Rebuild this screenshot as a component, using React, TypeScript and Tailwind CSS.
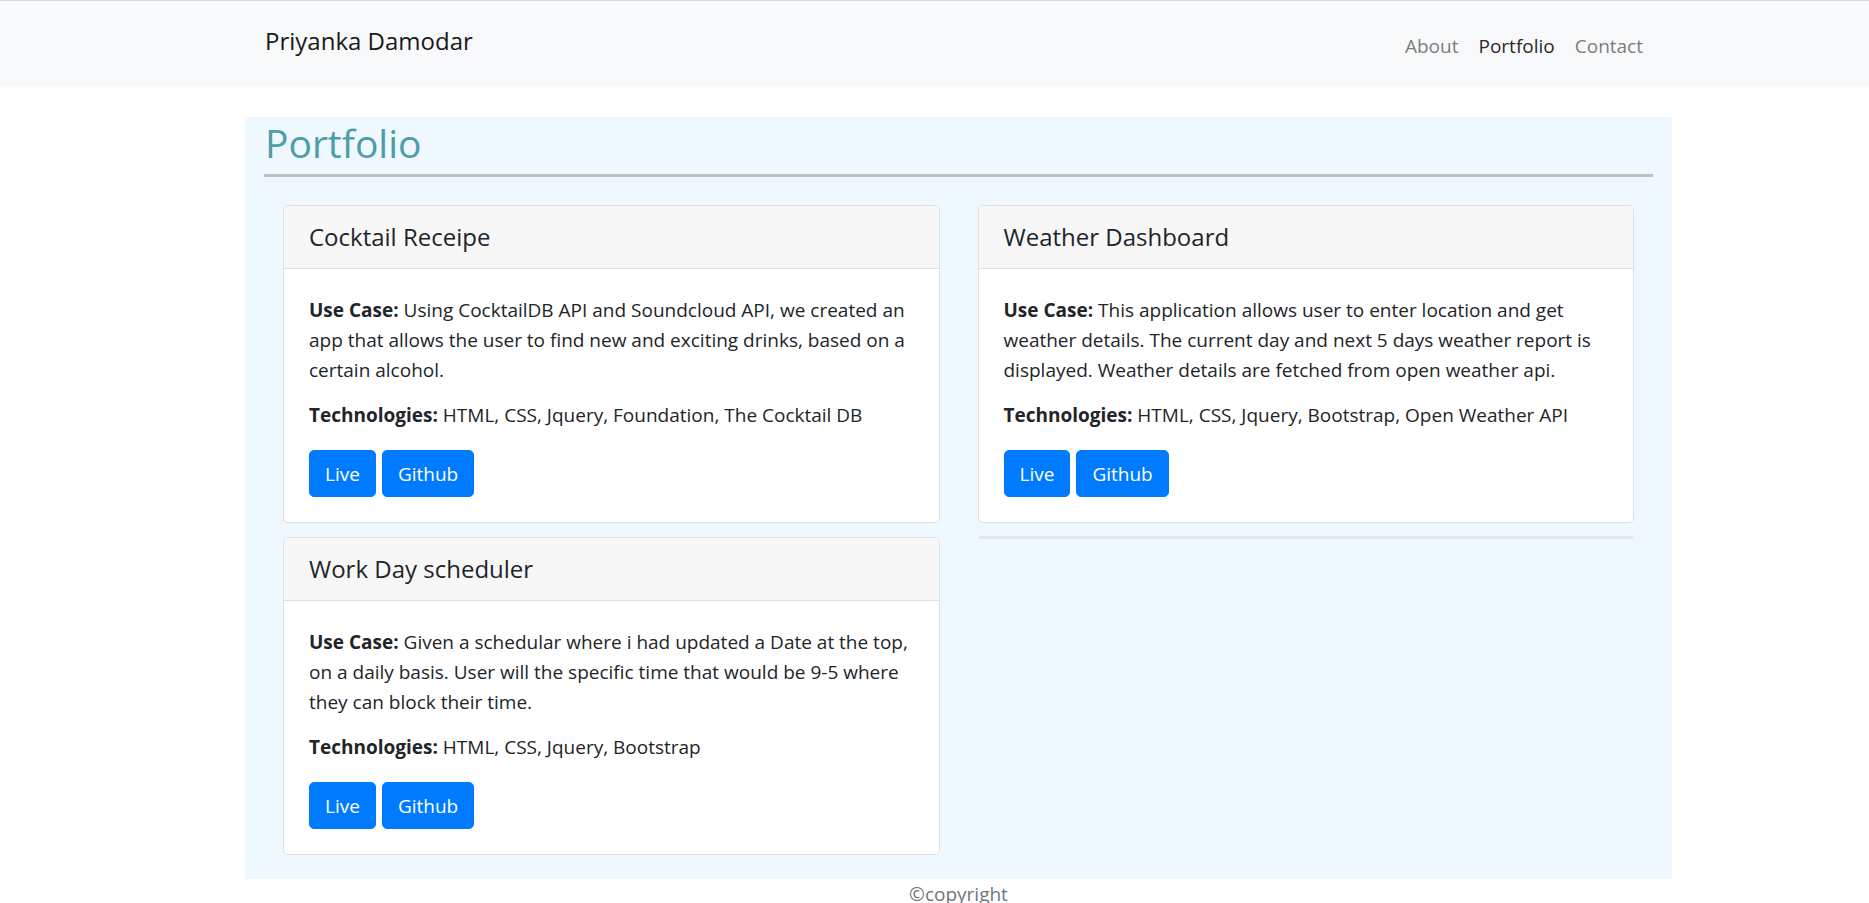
import React from 'react'

type Project = {
  title: string
  useCase: string
  tech: string
}

const projects: Project[] = [
  {
    title: 'Cocktail Receipe',
    useCase:
      'Using CocktailDB API and Soundcloud API, we created an app that allows the user to find new and exciting drinks, based on a certain alcohol.',
    tech: 'HTML, CSS, Jquery, Foundation, The Cocktail DB',
  },
  {
    title: 'Weather Dashboard',
    useCase:
      'This application allows user to enter location and get weather details. The current day and next 5 days weather report is displayed. Weather details are fetched from open weather api.',
    tech: 'HTML, CSS, Jquery, Bootstrap, Open Weather API',
  },
  {
    title: 'Work Day scheduler',
    useCase:
      'Given a schedular where i had updated a Date at the top, on a daily basis. User will the specific time that would be 9-5 where they can block their time.',
    tech: 'HTML, CSS, Jquery, Bootstrap',
  },
]

function ProjectCard({ project }: { project: Project }) {
  return (
    <div className="rounded-[5px] border border-[#dfdfdf] bg-white overflow-hidden">
      <div className="h-[63px] flex items-center px-[25px] bg-[#f7f7f7] border-b border-[#dfdfdf]">
        <h5 className="text-[24px] font-medium leading-[30px] text-[#212529]">{project.title}</h5>
      </div>
      <div className="px-[25px] pt-[26px] pb-[25px] text-[19px] leading-[30px] text-[#212529]">
        <p className="mb-[15px]">
          <strong className="font-bold">Use Case:</strong> {project.useCase}
        </p>
        <p className="mb-[20px]">
          <strong className="font-bold">Technologies:</strong> {project.tech}
        </p>
        <div className="flex gap-[6px]">
          <a className="h-[47px] px-[15px] flex items-center rounded-[5px] bg-[#007bff] text-white border border-[#007bff]">
            Live
          </a>
          <a className="h-[47px] px-[15px] flex items-center rounded-[5px] bg-[#007bff] text-white border border-[#007bff]">
            Github
          </a>
        </div>
      </div>
    </div>
  )
}

export default function App() {
  return (
    <div className="min-h-screen bg-white font-['Open_Sans','Noto_Sans',sans-serif]">
      <nav className="h-[86px] bg-[#f8f9fa] border-t border-[#dcdde0]">
        <div className="w-[1427px] ml-[245px] h-full px-[19px] flex items-center justify-between">
          <span className="text-[24px] font-medium leading-[30px] text-[#1a1a1a] mb-[6px] pl-[1px]">
            Priyanka Damodar
          </span>
          <ul className="flex items-center mt-[4px] text-[19px] leading-[28px]">
            <li className="px-[10px] text-[#7c7d7e]">About</li>
            <li className="px-[10px] text-[#2a2a2a]">Portfolio</li>
            <li className="px-[10px] text-[#7c7d7e]">Contact</li>
          </ul>
        </div>
      </nav>

      <main className="w-[1427px] ml-[245px] mt-[31px] bg-[#f0f8ff] px-[19px] pt-[2px] pb-[24px]">
        <h1 className="text-[39px] font-medium leading-[47px] text-[#4c9ea7] pl-[1px]">Portfolio</h1>
        <div className="h-[3px] bg-[#bdc1c5] mt-[8px] mb-[28px]" />
        <div className="grid grid-cols-2 gap-x-[38px] px-[19px] items-start">
          <div className="flex flex-col gap-[14px]">
            <ProjectCard project={projects[0]} />
            <ProjectCard project={projects[2]} />
          </div>
          <div className="flex flex-col gap-[13px]">
            <ProjectCard project={projects[1]} />
            <div className="h-[3px] rounded-[2px] bg-[#e5e8eb]" />
          </div>
        </div>
      </main>

      <footer className="w-[1427px] ml-[245px] text-center text-[19px] leading-[30px] text-[#6c757d]">
        ©copyright
      </footer>
    </div>
  )
}
